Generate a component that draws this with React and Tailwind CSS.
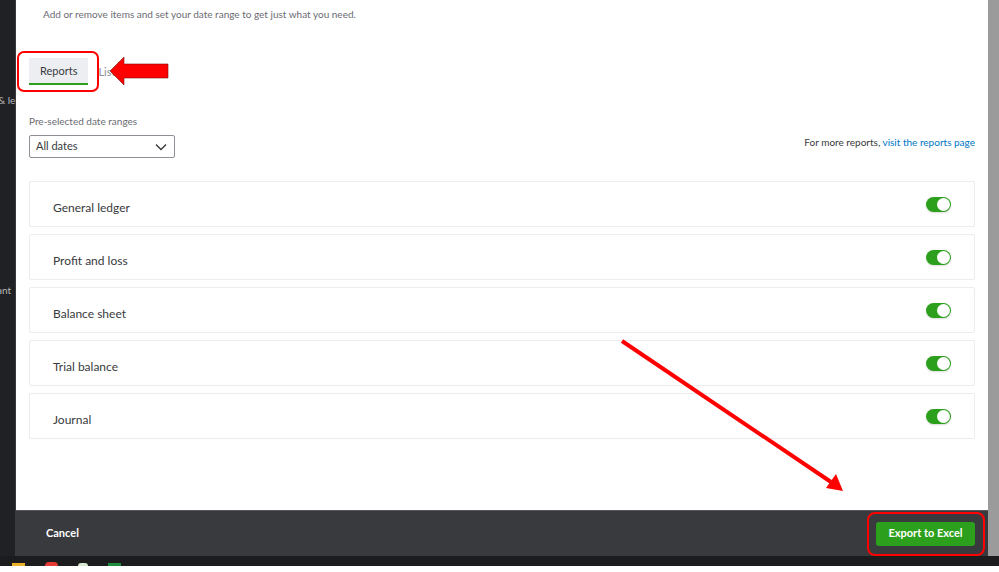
import React from "react";

const rows = ["General ledger", "Profit and loss", "Balance sheet", "Trial balance", "Journal"];

function Toggle() {
  return (
    <div className="flex h-[15px] w-[25px] items-center justify-end rounded-full bg-[#2ca01c] pr-[1px] shadow-[0_1px_2px_rgba(0,0,0,0.15)]">
      <div className="h-[13px] w-[13px] rounded-full bg-white" />
    </div>
  );
}

export default function App() {
  return (
    <div
      className="relative flex h-[572px] w-[999px] flex-col overflow-hidden bg-white text-[#393a3d]"
      style={{ fontFamily: 'Lato, "Liberation Sans", sans-serif' }}
    >
      <div className="flex min-h-0 flex-1">
        {/* app nav behind the modal */}
        <div className="flex w-[16px] flex-col border-r border-[#3a3b3e] bg-[#202124] text-[10px] text-[#b8b9bc]">
          <span className="mt-[93px] whitespace-nowrap leading-[14px] -ml-[2px]">& le</span>
          <span className="mt-[176px] whitespace-nowrap leading-[14px] -ml-[3px]">ant</span>
        </div>

        {/* modal */}
        <div className="flex min-w-0 flex-1 flex-col">
          <div className="flex-1 px-[13px] pt-[6px]">
            <p className="ml-[14px] text-[10px] leading-[16px] text-[#6b6c72]">
              Add or remove items and set your date range to get just what you need.
            </p>

            <div className="mt-[36px] flex items-center">
              <div className="relative">
                <div className="flex h-[27px] items-center border-b-[2px] border-[#2ca01c] bg-[#eceef1] px-[11px] pt-[2px] text-[11px]">
                  Reports
                </div>
                <div className="pointer-events-none absolute -bottom-[7px] -left-[12px] -right-[11px] -top-[7px] rounded-[7px] border-[2px] border-[#f00]" />
              </div>
              <span className="ml-[10px] pt-[2px] text-[11px] text-[#8d9096]">Lists</span>
            </div>

            <div className="mt-[29px] text-[10px] leading-[14px] text-[#6b6c72]">Pre-selected date ranges</div>
            <div className="mt-[7px] flex items-end justify-between">
              <div className="flex h-[23px] w-[146px] items-center justify-between rounded-[2px] border border-[#8d9096] pl-[6px] pr-[7px] text-[11px]">
                <span>All dates</span>
                <svg width="12" height="8" viewBox="0 0 12 8" fill="none" stroke="#393a3d" strokeWidth="1.4">
                  <path d="M1 1.5 6 6.5 11 1.5" />
                </svg>
              </div>
              <div className="mb-[8px] text-[10px] text-[#393a3d]">
                For more reports, <span className="text-[#0077c5]">visit the reports page</span>
              </div>
            </div>

            <div className="mt-[23px] flex flex-col gap-[7px]">
              {rows.map((r) => (
                <div
                  key={r}
                  className="flex h-[46px] items-center justify-between rounded-[2px] border border-[#ebecee] pl-[23px] pr-[23px]"
                >
                  <span className="pt-[8px] text-[12px]">{r}</span>
                  <Toggle />
                </div>
              ))}
            </div>
          </div>

          <div className="flex h-[46px] items-center justify-between border-t border-[#55565a] bg-[#393a3d] pl-[30px] pr-[13px]">
            <span className="text-[11px] font-bold text-white">Cancel</span>
            <div className="relative">
              <div className="flex h-[24px] w-[99px] items-center justify-center rounded-[3px] bg-[#2ca01c] text-[11px] font-bold text-white">
                Export to Excel
              </div>
              <div className="pointer-events-none absolute -bottom-[10px] -left-[9px] -right-[10px] -top-[10px] rounded-[8px] border-[2px] border-[#f00]" />
            </div>
          </div>
        </div>

        <div className="w-[11px] bg-[#9b9b9b]" />
      </div>

      {/* taskbar peeking at the bottom */}
      <div className="flex h-[10px] items-end gap-[20px] bg-[#1c1c1e] pl-[12px]">
        <div className="h-[3px] w-[13px] bg-[#e8b02b]" />
        <div className="h-[4px] w-[13px] rounded-t-full bg-[#e53935]" />
        <div className="h-[3px] w-[10px] rounded-t-full bg-[#d9e8d0]" />
        <div className="h-[3px] w-[13px] bg-[#1e8e3e]" />
      </div>
      <div className="h-[6px] bg-white" />

      {/* annotation arrows */}
      <svg className="pointer-events-none absolute left-0 top-0" width="999" height="572">
        <polygon points="110,71 124,57 124,64 168,64 168,78 124,78 124,85" fill="#f00" stroke="#7a1010" strokeWidth="0.6" />
        <line x1="622" y1="341" x2="831" y2="482" stroke="#f00" strokeWidth="4" />
        <polygon points="843,491 826,488 836,474" fill="#f00" />
      </svg>
    </div>
  );
}
